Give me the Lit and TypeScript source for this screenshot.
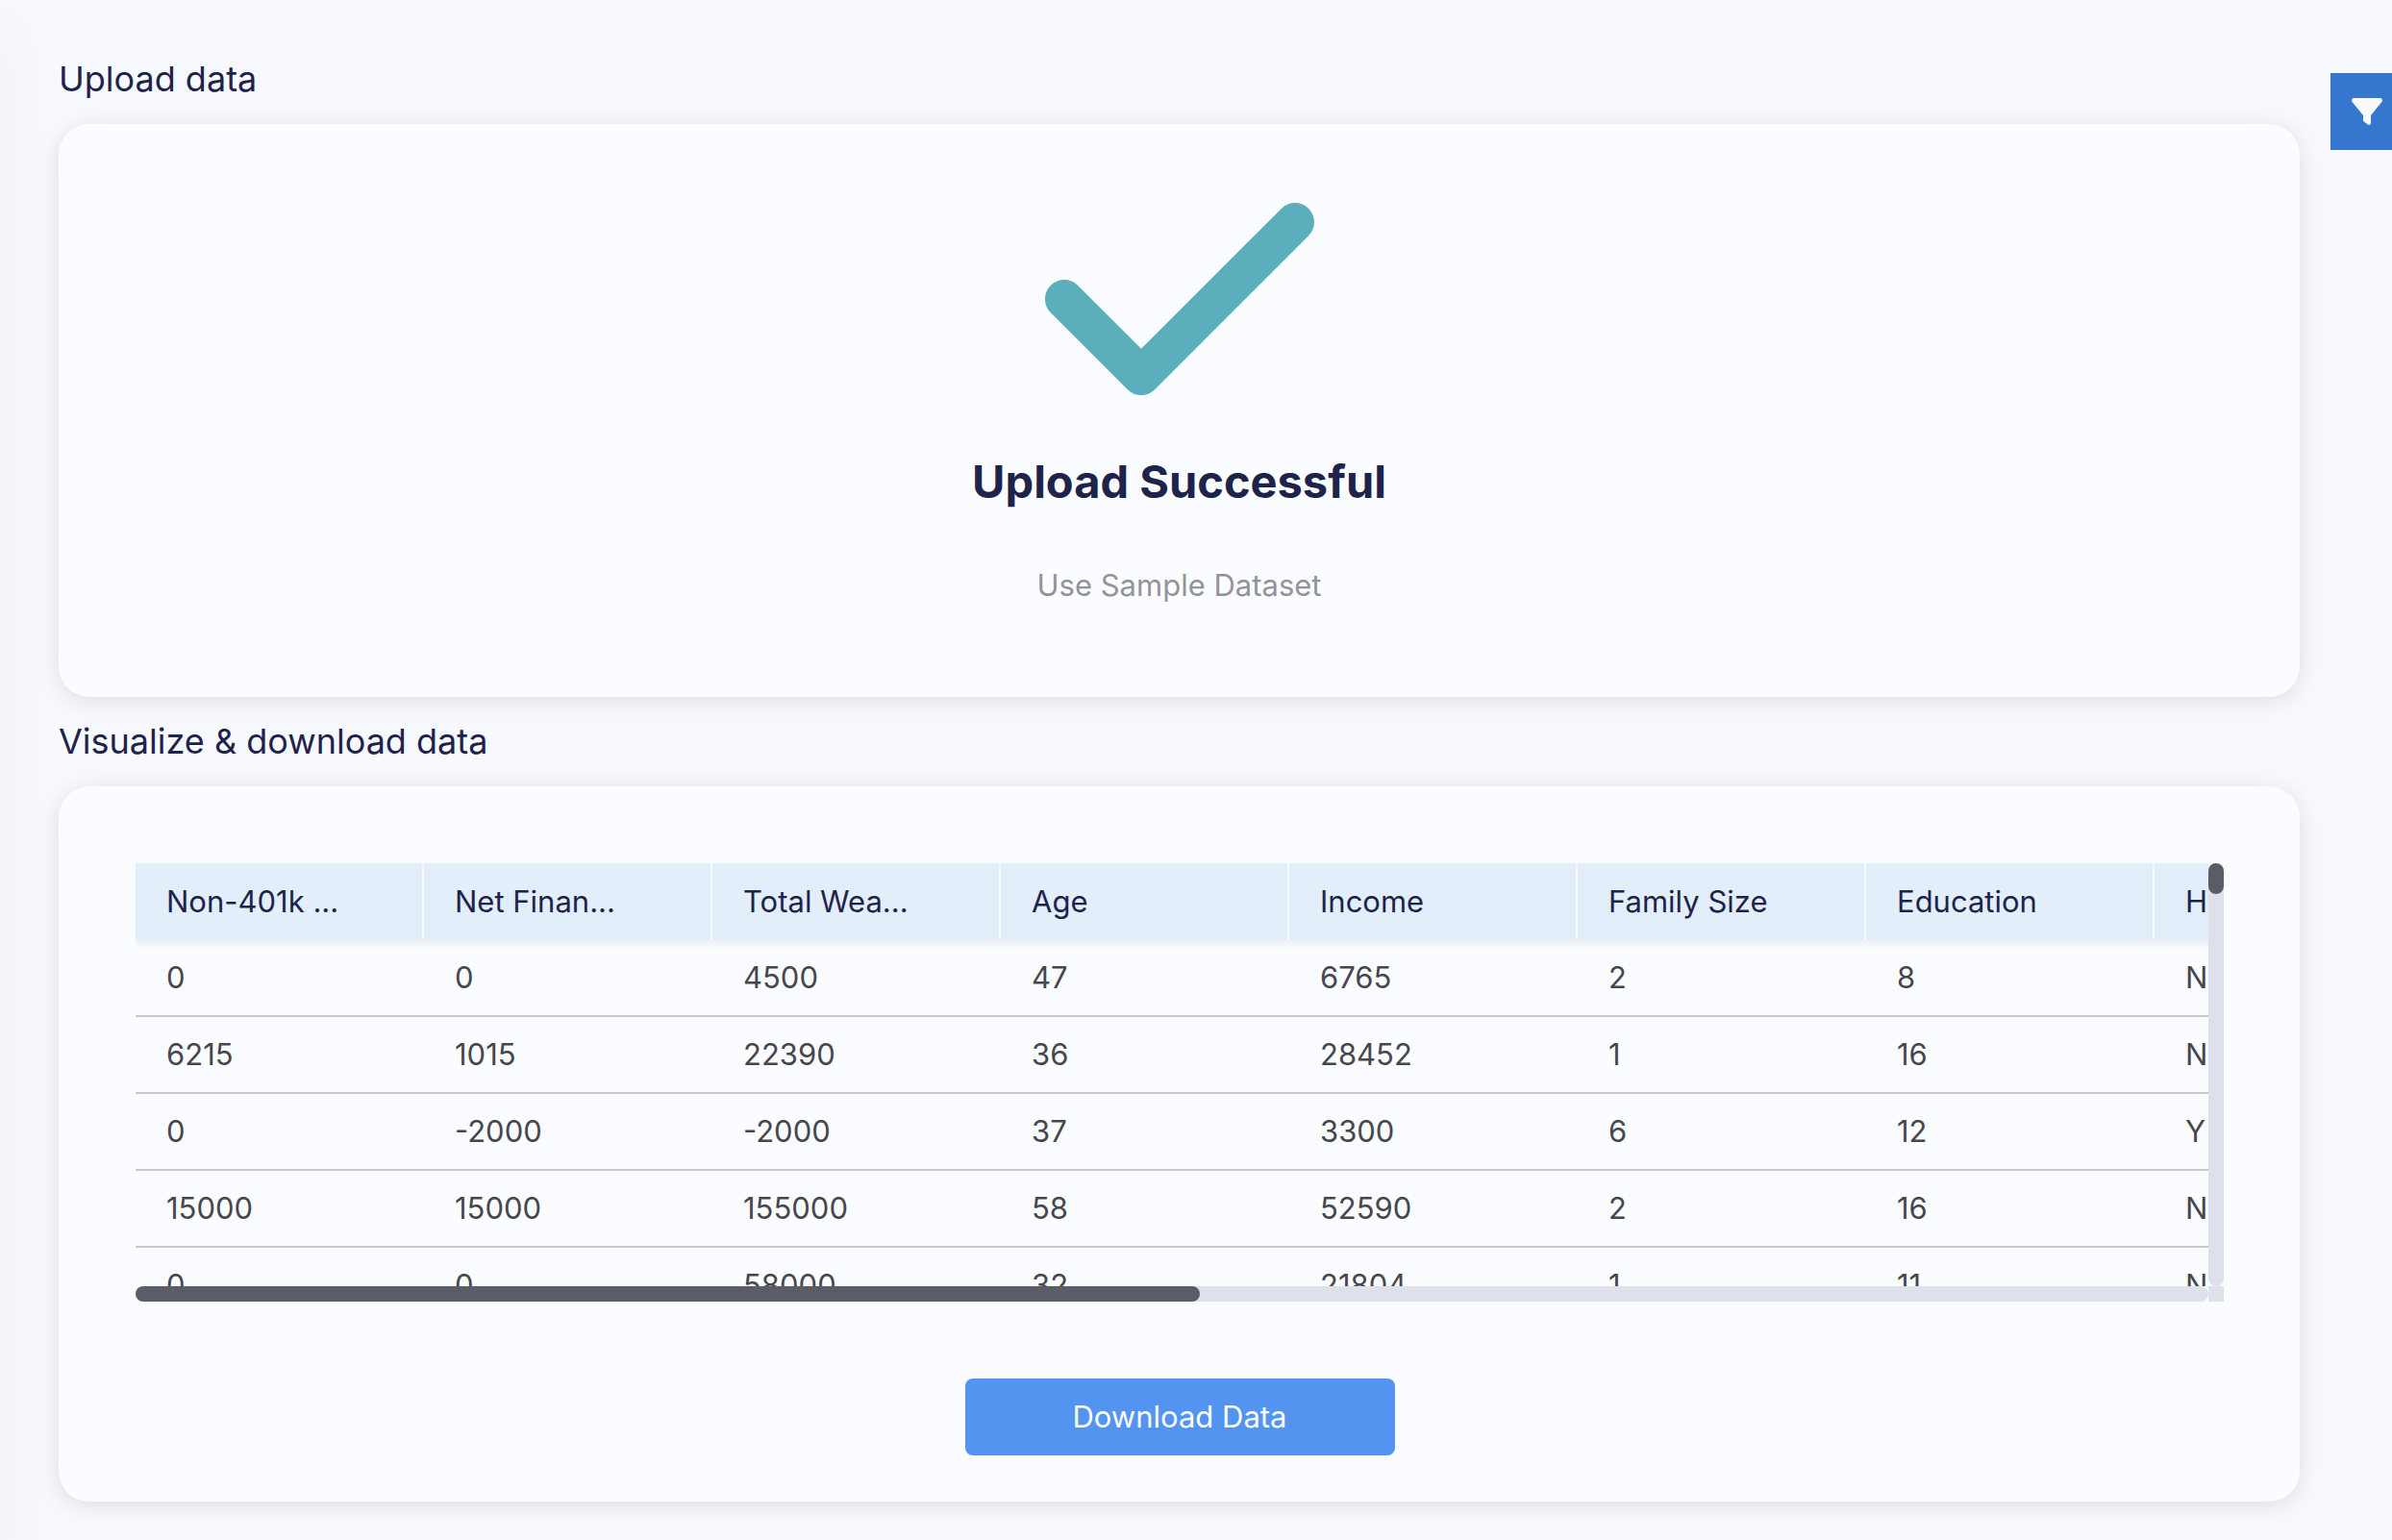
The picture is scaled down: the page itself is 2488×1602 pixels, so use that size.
import { LitElement, html, css } from "lit";
import { customElement, property } from "lit/decorators.js";

const COLUMNS = ["Non-401k ...", "Net Finan...", "Total Wea...", "Age", "Income", "Family Size", "Education", "Has"];

const ROWS = [
  ["0", "0", "4500", "47", "6765", "2", "8", "N"],
  ["6215", "1015", "22390", "36", "28452", "1", "16", "N"],
  ["0", "-2000", "-2000", "37", "3300", "6", "12", "Y"],
  ["15000", "15000", "155000", "58", "52590", "2", "16", "N"],
  ["0", "0", "58000", "32", "21804", "1", "11", "N"],
];

@customElement("data-grid")
export class DataGrid extends LitElement {
  @property({ attribute: false }) columns: string[] = [];
  @property({ attribute: false }) rows: string[][] = [];

  static styles = css`
    :host {
      display: grid;
      grid-template-columns: minmax(0, 1fr) 16px;
      grid-template-rows: 440px 16px;
    }
    .viewport {
      overflow: auto;
      scrollbar-width: none;
    }
    table {
      table-layout: fixed;
      width: 2400px;
      border-spacing: 0;
      font-size: 31px;
      line-height: 40px;
    }
    th,
    td {
      box-sizing: border-box;
      height: 80px;
      padding: 0 32px;
      text-align: left;
      white-space: nowrap;
      font-weight: 400;
    }
    thead tr {
      box-shadow: 0 4px 8px rgba(30, 35, 76, 0.07);
    }
    th {
      color: #1e234c;
      background: #e2eefa;
      border-right: 2px solid #f8f9ff;
    }
    td {
      color: #46474e;
      border-bottom: 2px solid #c5c6ce;
    }
    .track {
      background: #dfe1ea;
    }
    .vertical,
    .horizontal,
    .thumb {
      border-radius: 8px;
    }
    .thumb {
      background: #5b5d66;
    }
    .vertical .thumb {
      height: 32px;
    }
    .horizontal .thumb {
      height: 16px;
    }
  `;

  render() {
    return html`
      <div class="viewport" tabindex="-1">
        <table>
          <thead>
            <tr>
              ${this.columns.map((c) => html`<th scope="col">${c}</th>`)}
            </tr>
          </thead>
          <tbody>
            ${this.rows.map((r) => html`<tr>${r.map((v) => html`<td>${v}</td>`)}</tr>`)}
          </tbody>
        </table>
      </div>
      <div class="track vertical"><div class="thumb"></div></div>
      <div class="track horizontal"><div class="thumb" style="width: ${(100 * 7.19) / 14}%"></div></div>
      <div class="track"></div>
    `;
  }
}

@customElement("app-root")
export class AppRoot extends LitElement {
  static styles = css`
    :host {
      display: block;
      position: relative;
      box-sizing: border-box;
      min-height: 100vh;
      padding: 36px 96px 40px 61px;
      overflow: hidden;
      background: #f8f9ff;
      color: #1e234c;
      font-family: Inter, "Liberation Sans", sans-serif;
    }
    /* Soft shadow cast by the navigation edge */
    .edge {
      position: absolute;
      top: 32px;
      bottom: -40px;
      left: -40px;
      width: 40px;
      box-shadow: 0 0 64px rgba(0, 0, 0, 0.05);
    }
    h2 {
      margin: 0;
      font-size: 36px;
      font-weight: 400;
      line-height: 93px;
    }
    .card {
      display: flex;
      flex-direction: column;
      align-items: center;
      border-radius: 32px;
      background: #fbfcff;
      box-shadow: 0 4px 24px rgba(0, 0, 0, 0.11);
    }
    .upload {
      padding: 22px 80px 96px;
    }
    .check {
      width: 280px;
      height: 320px;
      fill: #5bafbd;
    }
    .status {
      margin: 0 0 58px;
      font-size: 47px;
      font-weight: 700;
      line-height: 60px;
    }
    .sample {
      color: #93939b;
      font-size: 31px;
      line-height: 40px;
      text-decoration: none;
    }
    .data {
      padding: 80px 79px 48px 80px;
      gap: 80px;
    }
    data-grid {
      align-self: stretch;
    }
    button {
      border: 0;
      padding: 0;
      font-family: inherit;
      cursor: pointer;
    }
    .download {
      width: 447px;
      height: 80px;
      border-radius: 8px;
      background: #5294ef;
      color: #fbfcff;
      font-size: 31px;
      line-height: 40px;
    }
    .filter {
      position: absolute;
      top: 76px;
      right: 0;
      display: flex;
      align-items: center;
      width: 64px;
      height: 80px;
      padding-left: 22px;
      background: #3577ce;
    }
    .filter svg {
      flex: none;
      width: 32px;
      height: 32px;
      fill: #f8f9ff;
    }
  `;

  render() {
    return html`
      <div class="edge"></div>
      <section>
        <h2>Upload data</h2>
        <div class="card upload">
          <svg class="check" viewBox="0 0 448 512" aria-hidden="true">
            <path d="M438.6 105.4c12.5 12.5 12.5 32.8 0 45.3l-256 256c-12.5 12.5-32.8 12.5-45.3 0l-128-128c-12.5-12.5-12.5-32.8 0-45.3s32.8-12.5 45.3 0L160 338.7 393.4 105.4c12.5-12.5 32.8-12.5 45.3 0z" />
          </svg>
          <p class="status">Upload Successful</p>
          <a class="sample" href="#sample">Use Sample Dataset</a>
        </div>
      </section>
      <section>
        <h2>Visualize &amp; download data</h2>
        <div class="card data">
          <data-grid .columns=${COLUMNS} .rows=${ROWS}></data-grid>
          <button class="download" type="button">Download Data</button>
        </div>
      </section>
      <button class="filter" type="button" aria-label="Filter">
        <svg viewBox="0 0 512 512" aria-hidden="true">
          <path d="M3.9 54.9C10.5 40.9 24.5 32 40 32H472c15.5 0 29.5 8.9 36.1 22.9s4.6 30.5-5.2 42.5L320 320.9V448c0 12.1-6.8 23.2-17.7 28.6s-23.8 4.3-33.5-3l-64-48c-8.1-6-12.8-15.5-12.8-25.6V320.9L9 97.3C-.7 85.4-2.8 68.8 3.9 54.9z" />
        </svg>
      </button>
    `;
  }
}
